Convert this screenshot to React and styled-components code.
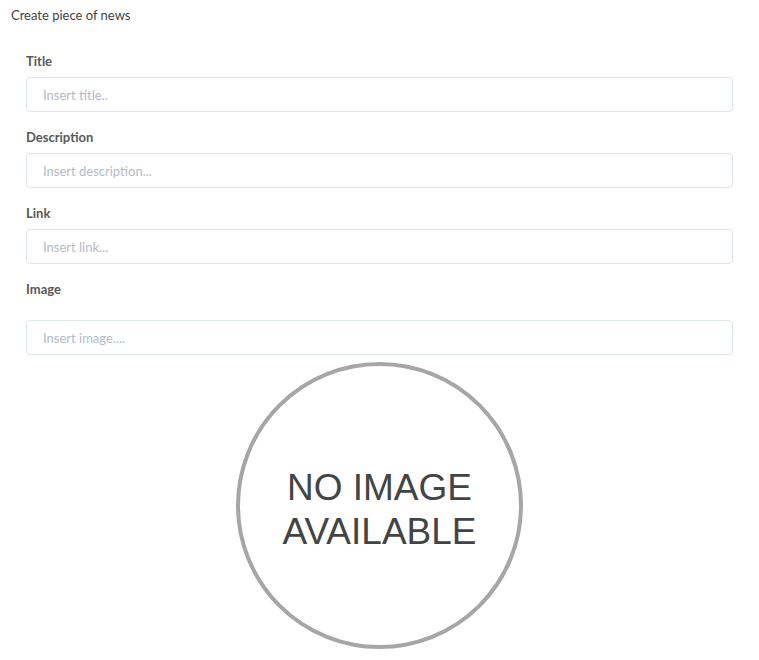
import React from 'react'
import styled, { createGlobalStyle } from 'styled-components'

const GlobalStyle = createGlobalStyle`
  body {
    margin: 0;
    background: #ffffff;
    font-family: Lato, "Open Sans", sans-serif;
  }
`

const Page = styled.div`
  padding: 6px 11px 0 11px;
`

const Heading = styled.div`
  font-size: 13px;
  line-height: 18px;
  color: #444;
`

const Form = styled.form`
  padding: 28px 15px 0 15px;
  display: flex;
  flex-direction: column;
`

const Field = styled.div`
  display: flex;
  flex-direction: column;
  margin-bottom: 16px;
`

const Label = styled.label`
  font-size: 13px;
  font-weight: 700;
  line-height: 18px;
  color: #585858;
  margin-bottom: ${p => p.$gap || 7}px;
`

const Input = styled.input`
  box-sizing: border-box;
  height: 35px;
  width: 100%;
  border: 1px solid #dde6e9;
  border-radius: 4px;
  padding: 0 16px;
  font-family: inherit;
  font-size: 13px;
  color: #333;
  outline: none;
  &::placeholder {
    color: #b4bac8;
  }
`

const Preview = styled.div`
  display: flex;
  justify-content: center;
  margin-top: -9px;
`

const NoImage = styled.div`
  box-sizing: border-box;
  width: 287px;
  height: 287px;
  padding-top: 8px;
  border-radius: 50%;
  border: 4px solid #a6a6a6;
  display: flex;
  flex-direction: column;
  align-items: center;
  justify-content: center;
  font-family: "Liberation Sans", Arial, sans-serif;
  font-size: 37px;
  line-height: 44px;
  color: #444;
  text-align: center;
`

const fields = [
  { label: 'Title', placeholder: 'Insert title..' },
  { label: 'Description', placeholder: 'Insert description...' },
  { label: 'Link', placeholder: 'Insert link...' },
  { label: 'Image', placeholder: 'Insert image....', gap: 22 },
]

export default function App() {
  return (
    <>
      <GlobalStyle />
      <Page>
        <Heading>Create piece of news</Heading>
        <Form onSubmit={e => e.preventDefault()}>
          {fields.map(f => (
            <Field key={f.label}>
              <Label $gap={f.gap}>{f.label}</Label>
              <Input placeholder={f.placeholder} />
            </Field>
          ))}
        </Form>
        <Preview>
          <NoImage>
            <span>NO IMAGE</span>
            <span>AVAILABLE</span>
          </NoImage>
        </Preview>
      </Page>
    </>
  )
}
